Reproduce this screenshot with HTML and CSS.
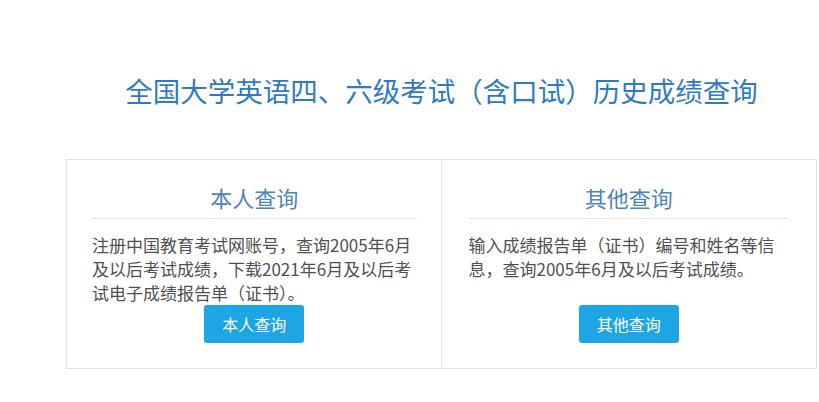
FILE: index.html
```html
<!DOCTYPE html>
<html lang="zh-CN">
<head>
    <meta charset="UTF-8">
    <meta name="viewport" content="width=device-width, initial-scale=1.0">
    <title>全国大学英语四、六级考试（含口试）历史成绩查询</title>
    <link rel="stylesheet" href="styles.css">
</head>
<body>

    <div class="wrap">
        <h1>全国大学英语四、六级考试（含口试）历史成绩查询</h1>

        <div class="query-box">
            <div class="query-item query-self">
                <h2>本人查询</h2>
                <p>注册中国教育考试网账号，查询2005年6月及以后考试成绩，下载2021年6月及以后考试电子成绩报告单（证书）。</p>
                <button class="btn">本人查询</button>
            </div>
            <div class="query-item query-other">
                <h2>其他查询</h2>
                <p>输入成绩报告单（证书）编号和姓名等信息，查询2005年6月及以后考试成绩。</p>
                <button class="btn">其他查询</button>
            </div>
        </div>
    </div>

</body>
</html>
```

FILE: styles.css
```css
body {
    margin: 0;
    background-color: #fff;
    font-family: "Noto Sans CJK SC", "Noto Sans", sans-serif;
}
.wrap {
    margin-left: 66px;
    width: 751px;
    padding-top: 72px;
}
h1 {
    margin: 0 0 51px;
    font-size: 27.5px;
    line-height: 36px;
    font-weight: normal;
    color: #2f7bc2;
    text-align: center;
}
.query-box {
    display: grid;
    grid-template-columns: 1fr 1fr;
    border: 1px solid #e2e2e2;
}
.query-item {
    display: flex;
    flex-direction: column;
    padding: 0 27px 25px;
}
.query-self {
    padding: 0 24px 25px 25px;
    border-right: 1px solid #e2e2e2;
}
.query-item h2 {
    margin: 0;
    padding: 22px 0 6px;
    font-size: 22px;
    line-height: 30px;
    font-weight: normal;
    color: #4c84bc;
    text-align: center;
    border-bottom: 1px solid #e3e3e3;
}
.query-item p {
    margin: 14px 0 0;
    font-size: 17px;
    line-height: 24px;
    color: #505050;
}
.btn {
    align-self: center;
    margin-top: auto;
    width: 100px;
    height: 38px;
    border: none;
    border-radius: 3px;
    background-color: #1ea5e3;
    color: #fff;
    font-family: inherit;
    font-size: 16px;
    cursor: pointer;
}
```
